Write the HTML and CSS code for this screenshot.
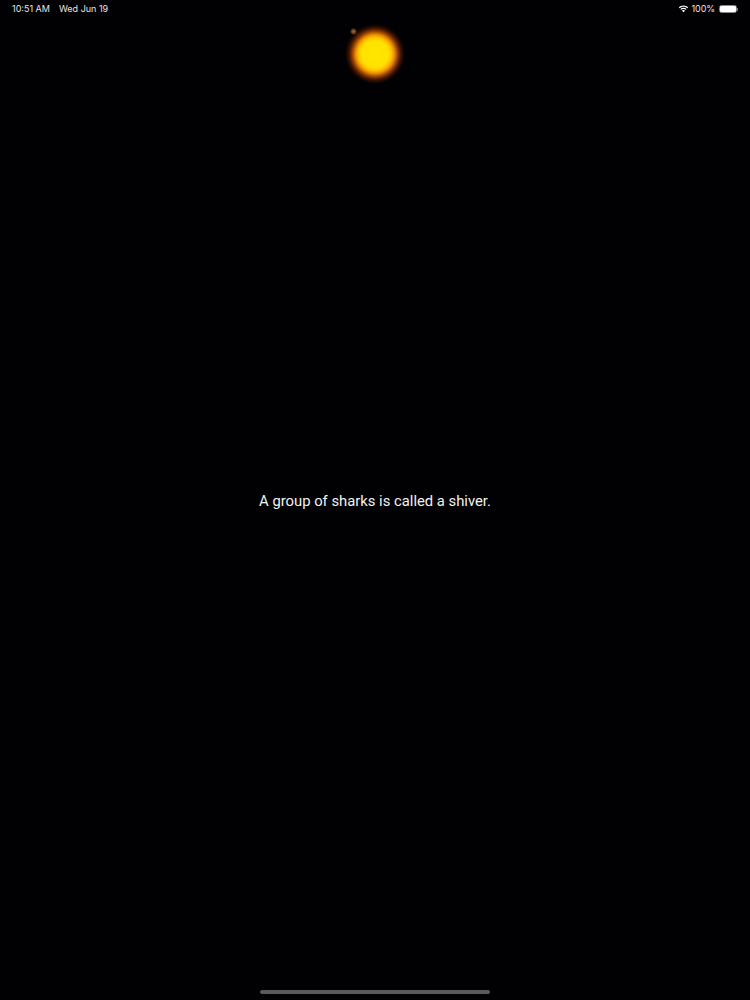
FILE: index.html
```html
<!DOCTYPE html>
<html lang="en">
<head>
<meta charset="utf-8">
<title>Shark fact</title>
<link rel="stylesheet" href="styles.css">
</head>
<body>
<div class="screen">
  <header class="status">
    <div class="status-left"><span>10:51 AM</span><span>Wed Jun 19</span></div>
    <div class="status-right">
      <svg class="wifi" viewBox="0 0 12 9" width="11" height="8" aria-hidden="true">
        <path fill="#fff" d="M6 1.9c1.7 0 3.2.65 4.35 1.75l.85-.9C9.8 1.4 8 .6 6 .6S2.2 1.4.8 2.75l.85.9C2.8 2.55 4.3 1.9 6 1.9zM6 4.4c1 0 1.9.38 2.6 1.02l.87-.9C8.55 3.66 7.35 3.15 6 3.15s-2.55.5-3.47 1.37l.87.9C4.1 4.78 5 4.4 6 4.4zM6 5.7c-.68 0-1.28.26-1.74.68L6 8.2l1.74-1.82C7.28 5.96 6.68 5.7 6 5.7z"/>
      </svg>
      <span class="percent">100%</span>
      <div class="battery"><div class="battery-fill"></div></div>
      <div class="battery-cap"></div>
    </div>
  </header>
  <div class="sun-row">
    <div class="sun"><div class="speck"></div></div>
  </div>
  <main class="fact">A group of sharks is called a shiver.</main>
  <footer class="home-row"><div class="home-bar"></div></footer>
</div>
</body>
</html>
```
FILE: styles.css
```css
* { box-sizing: border-box; }
html, body { margin: 0; height: 100%; background: #010103; }
.screen {
  width: 750px;
  height: 1000px;
  display: flex;
  flex-direction: column;
  color: #fff;
  font-family: Inter, "Liberation Sans", sans-serif;
  overflow: hidden;
}
.status {
  height: 18px;
  padding: 0 12px 0 12px;
  display: flex;
  justify-content: space-between;
  align-items: center;
  font-size: 9px;
  line-height: 12px;
  color: #e6e6e6;
}
.status-left { display: flex; gap: 9px; }
.status-right { display: flex; align-items: center; gap: 3px; }
.percent { letter-spacing: -0.1px; }
.battery {
  width: 18px;
  height: 8px;
  margin-left: 1px;
  margin-right: -3px;
  border: 1px solid #8a8a8a;
  border-radius: 2.5px;
  padding: 0;
}
.battery-fill { width: 100%; height: 100%; background: #fff; border-radius: 1px; }
.battery-cap { width: 1px; height: 3px; background: #888; border-radius: 0 1px 1px 0; }
.sun-row {
  height: 72px;
  padding-top: 6px;
  display: flex;
  justify-content: center;
}
.sun {
  position: relative;
  width: 60px;
  height: 60px;
  border-radius: 50%;
  background: radial-gradient(circle closest-side, #ffe600 0%, #ffe200 44%, #ffc400 55%, #e88a00 65%, #9a4400 75%, #481800 85%, #1c0800 93%, #010103 100%);
}
.speck {
  position: absolute;
  left: 5px;
  top: 4px;
  width: 7px;
  height: 7px;
  border-radius: 50%;
  background: radial-gradient(circle closest-side, #a86c34, #6a3a12 60%, transparent);
  box-shadow: 5px 4px 3px -2px #5a2c08;
}
.fact {
  flex: 1;
  padding-top: 400px;
  text-align: center;
  font-family: Roboto, "Liberation Sans", sans-serif;
  font-size: 14.8px;
  line-height: 22px;
  color: #f2f2f2;
}
.home-row {
  height: 13px;
  padding-top: 3px;
  display: flex;
  justify-content: center;
}
.home-bar {
  width: 230px;
  height: 4px;
  background: #5a5a5a;
  border-radius: 2px;
}
```
